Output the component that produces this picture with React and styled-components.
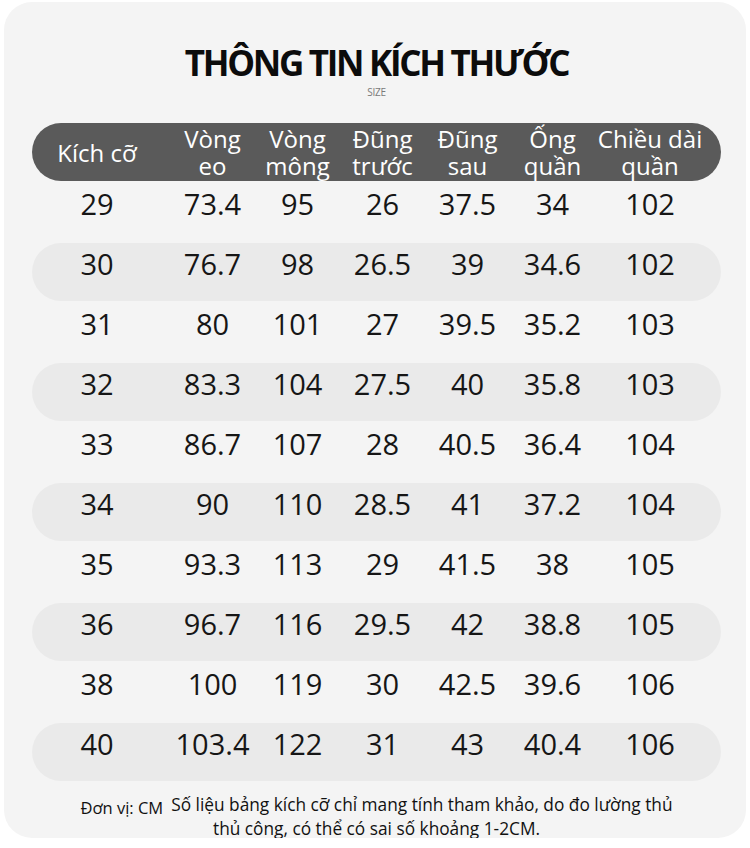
import React from "react";
import styled, { createGlobalStyle } from "styled-components";

const GlobalStyle = createGlobalStyle`
  html, body {
    margin: 0;
    padding: 0;
    background: #ffffff;
  }
  body {
    font-family: "Open Sans", "Noto Sans", sans-serif;
    color: #151515;
  }
`;

const Card = styled.div`
  margin: 2px 4px 0;
  height: 836px;
  box-sizing: border-box;
  padding: 43px 25px 0 28px;
  background: #f4f4f4;
  border-radius: 28px;
`;

const Title = styled.h1`
  margin: 0;
  text-align: center;
  font-size: 35px;
  line-height: 35px;
  font-weight: 700;
  letter-spacing: -2.3px;
  color: #0c0c0c;
`;

const Subtitle = styled.div`
  margin-top: 7px;
  text-align: center;
  font-size: 10px;
  line-height: 10px;
  letter-spacing: -0.3px;
  color: #7a7a7a;
`;

const Grid = styled.div`
  display: grid;
  grid-template-columns: 138px repeat(5, 85px) 1fr;
  align-items: center;
`;

const HeaderBar = styled(Grid)`
  margin-top: 26px;
  height: 58px;
  border-radius: 29px;
  background: #5a5a5a;
  color: #ffffff;
  font-size: 24px;
  line-height: 27px;
`;

const Row = styled(Grid)`
  margin-top: 2px;
  height: 58px;
  box-sizing: border-box;
  padding-bottom: 18px;
  border-radius: 29px;
  background: ${(p) => (p.$shaded ? "#eaeaea" : "transparent")};
  font-size: 29px;
  color: #161616;
`;

const Cell = styled.div`
  text-align: center;
  white-space: nowrap;
  padding-right: ${(p) => (p.$first ? "8px" : p.$last ? "16px" : "0")};
`;

const Footer = styled.p`
  margin: 13px 0 0;
  text-align: center;
  font-size: 17.3px;
  line-height: 21px;
  color: #111;
`;

const Unit = styled.span`
  font-size: 16.5px;
  margin-right: 8px;
  vertical-align: -3px;
`;

const headers = [
  ["Kích cỡ"],
  ["Vòng", "eo"],
  ["Vòng", "mông"],
  ["Đũng", "trước"],
  ["Đũng", "sau"],
  ["Ống", "quần"],
  ["Chiều dài", "quần"],
];

const sizes = [
  ["29", "73.4", "95", "26", "37.5", "34", "102"],
  ["30", "76.7", "98", "26.5", "39", "34.6", "102"],
  ["31", "80", "101", "27", "39.5", "35.2", "103"],
  ["32", "83.3", "104", "27.5", "40", "35.8", "103"],
  ["33", "86.7", "107", "28", "40.5", "36.4", "104"],
  ["34", "90", "110", "28.5", "41", "37.2", "104"],
  ["35", "93.3", "113", "29", "41.5", "38", "105"],
  ["36", "96.7", "116", "29.5", "42", "38.8", "105"],
  ["38", "100", "119", "30", "42.5", "39.6", "106"],
  ["40", "103.4", "122", "31", "43", "40.4", "106"],
];

function App() {
  return (
    <>
      <GlobalStyle />
      <Card>
        <Title>THÔNG TIN KÍCH THƯỚC</Title>
        <Subtitle>SIZE</Subtitle>

        <HeaderBar>
          {headers.map((lines, i) => (
            <Cell key={i} $first={i === 0} $last={i === headers.length - 1}>
              {lines[0]}
              {lines[1] && (
                <>
                  <br />
                  {lines[1]}
                </>
              )}
            </Cell>
          ))}
        </HeaderBar>

        {sizes.map((row, r) => (
          <Row key={row[0]} $shaded={r % 2 === 1}>
            {row.map((v, i) => (
              <Cell key={i} $first={i === 0} $last={i === row.length - 1}>
                {v}
              </Cell>
            ))}
          </Row>
        ))}

        <Footer>
          <Unit>Đơn vị: CM</Unit>
          Số liệu bảng kích cỡ chỉ mang tính tham khảo, do đo lường thủ
          <br />
          thủ công, có thể có sai số khoảng 1-2CM.
        </Footer>
      </Card>
    </>
  );
}

export default App;
